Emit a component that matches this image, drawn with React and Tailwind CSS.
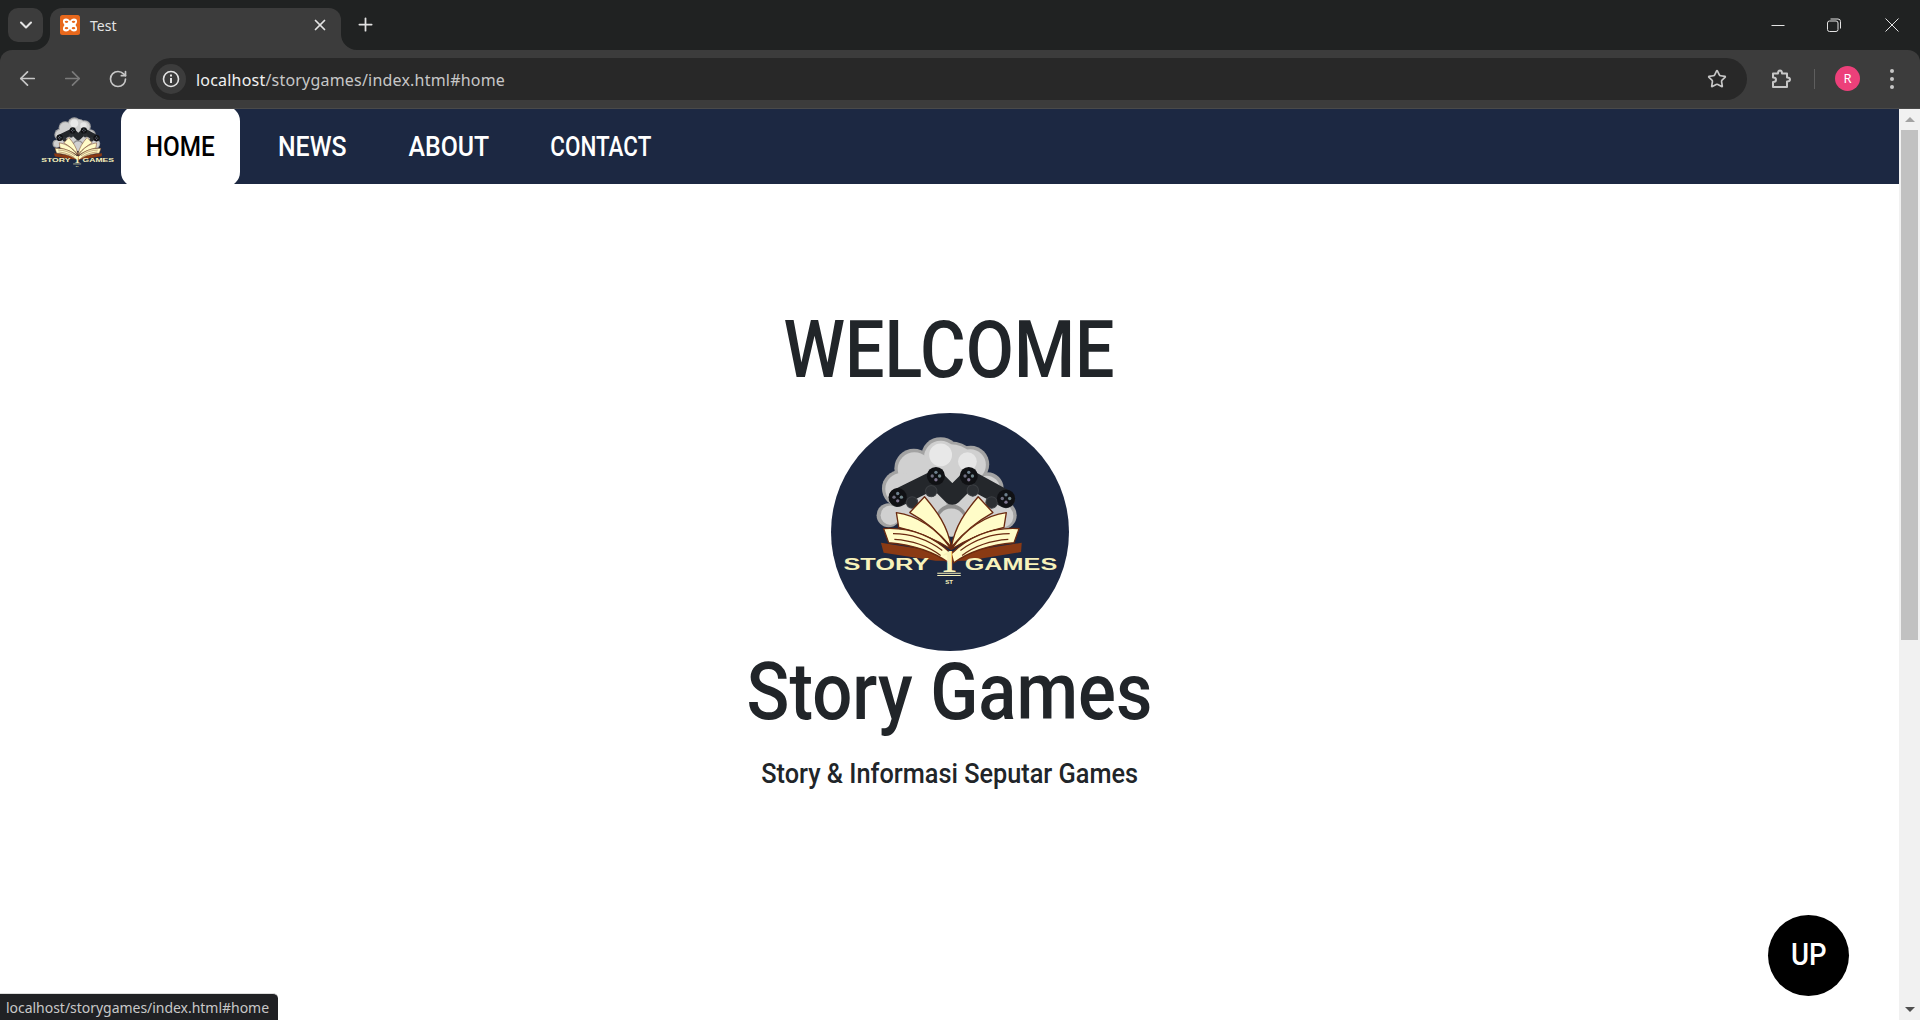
import React from "react";
import { ArrowLeft, ArrowRight, RotateCw, Star, X, Plus, ChevronDown } from "lucide-react";

function Logo({ circle, className }) {
  const pageL = (
    <g stroke="#6b2a10" strokeWidth="4" strokeLinejoin="round" fill="#fffcc8">
      <path d="M312,275 C350,320 380,360 392,425 C350,375 310,345 268,322 Z" />
      <path d="M228,322 C290,330 350,370 392,432 C340,398 290,378 235,366 Z" />
      <path d="M190,370 C270,365 340,395 392,445 L385,472 C330,432 270,418 205,412 Z" />
      <path d="M218,385 C270,385 320,402 365,435 M222,402 C270,405 320,420 360,450" fill="none" strokeWidth="3.500" />
    </g>
  );
  return (
    <svg viewBox="33 25 710 710" className={className}>
      {circle && <circle cx="388" cy="380" r="355" fill="#1c2842" />}
      <g fill="#a3a3a3">
        <circle cx="360" cy="155" r="58" /><circle cx="280" cy="190" r="58" /><circle cx="450" cy="178" r="55" />
        <circle cx="240" cy="250" r="55" /><circle cx="500" cy="250" r="48" /><circle cx="205" cy="330" r="36" />
        <circle cx="545" cy="330" r="42" /><circle cx="390" cy="200" r="90" /><circle cx="300" cy="300" r="85" /><circle cx="470" cy="300" r="85" />
      </g>
      <g fill="#d0d0d0">
        <circle cx="360" cy="158" r="50" /><circle cx="282" cy="192" r="50" /><circle cx="448" cy="180" r="47" />
        <circle cx="243" cy="252" r="48" /><circle cx="497" cy="252" r="40" /><circle cx="210" cy="330" r="29" />
        <circle cx="542" cy="332" r="35" /><circle cx="390" cy="200" r="82" /><circle cx="300" cy="300" r="78" /><circle cx="470" cy="300" r="78" />
      </g>
      <circle cx="360" cy="150" r="34" fill="#e8e8e8" />
      <circle cx="440" cy="170" r="28" fill="#e6e6e6" />
      <circle cx="392" cy="345" r="48" fill="#8f8f8f" />
      <circle cx="392" cy="352" r="42" fill="#d0d0d0" />
      <polyline points="232,278 345,222 395,272 445,222 555,282" fill="none" stroke="#24272b" strokeWidth="54" strokeLinejoin="round" strokeLinecap="round" />
      {[[275, 292], [332, 258], [456, 256], [512, 292]].map(([x, y], i) => (
        <circle key={i} cx={x} cy={y} r="17" fill="#2c2f33" stroke="#3c3f43" strokeWidth="3" />
      ))}
      {[[232, 276], [346, 213], [444, 213], [555, 280]].map(([x, y], i) => (
        <g key={i}>
          <circle cx={x} cy={y} r="27" fill="#101114" />
          <circle cx={x} cy={y - 11} r="5" fill="#6d7f8c" />
          <circle cx={x} cy={y + 11} r="5" fill="#7f7690" />
          <circle cx={x - 11} cy={y} r="5" fill="#6f6f80" />
          <circle cx={x + 11} cy={y} r="5" fill="#70858a" />
        </g>
      ))}
      <path d="M182,412 L360,440 L392,470 L425,440 L602,412 L600,440 L440,466 L345,466 L190,442 Z" fill="#8a3a14" />
      {pageL}
      <g transform="translate(784,0) scale(-1,1)">{pageL}</g>
      <text x="70" y="494" textLength="256" lengthAdjust="spacingAndGlyphs" fontFamily="Liberation Sans" fontWeight="700" fontSize="50" fill="#f7f2bb">STORY</text>
      <text x="432" y="494" textLength="276" lengthAdjust="spacingAndGlyphs" fontFamily="Liberation Sans" fontWeight="700" fontSize="50" fill="#f7f2bb">GAMES</text>
      <text x="385" y="498" textAnchor="middle" fontFamily="Liberation Serif" fontWeight="700" fontSize="96" fill="#f7f2bb">1</text>
      <path d="M350,503 H420 M350,510 H420" stroke="#f7f2bb" strokeWidth="3" />
      <text x="385" y="534" textAnchor="middle" fontFamily="Liberation Sans" fontWeight="700" fontSize="18" fill="#f7f2bb">ST</text>
    </svg>
  );
}

function Favicon() {
  return (
    <svg width="20" height="20" viewBox="0 0 20 20" className="shrink-0">
      <rect width="20" height="20" rx="2.5" fill="#e8681c" />
      <path d="M6 3.5 C8 3.5 9 4.5 10 6 C11 4.5 12 3.5 14 3.5 C17.5 3.5 18 7 15.5 10 C18 13 17.5 16.5 14 16.5 C12 16.5 11 15.5 10 14 C9 15.5 8 16.5 6 16.5 C2.500 16.5 2 13 4.500 10 C2 7 2.500 3.500 6 3.500 Z" fill="#fff" />
      <ellipse cx="6.500" cy="6.800" rx="1.800" ry="1.100" fill="#e8681c" />
      <ellipse cx="13.500" cy="6.800" rx="1.800" ry="1.100" fill="#e8681c" />
      <ellipse cx="6.500" cy="13.200" rx="1.800" ry="1.100" fill="#e8681c" />
      <ellipse cx="13.500" cy="13.200" rx="1.800" ry="1.100" fill="#e8681c" />
    </svg>
  );
}

function Tab() {
  return (
    <div className="relative ml-[7px] flex h-[42px] w-[291px] items-center rounded-t-[12px] bg-[#3c3c3c] pb-[8px] pl-[10px] pr-[12px]">
      <svg className="absolute bottom-0 left-[-16px]" width="16" height="16"><path d="M16 0 V16 H0 A16 16 0 0 0 16 0Z" fill="#3c3c3c" /></svg>
      <svg className="absolute bottom-0 right-[-16px]" width="16" height="16"><path d="M0 0 V16 H16 A16 16 0 0 1 0 0Z" fill="#3c3c3c" /></svg>
      <Favicon />
      <span className="ml-[10px] font-['Noto_Sans',sans-serif] text-[14px] text-[#e3e3e3]">Test</span>
      <X className="ml-auto text-[#e3e3e3]" size={18} strokeWidth={2.300} />
    </div>
  );
}

function WindowControls() {
  return (
    <div className="ml-auto flex h-[42px] items-center pb-[8px] text-[#e3e3e3]">
      <svg className="mr-[42px]" width="14" height="14" viewBox="0 0 14 14"><path d="M0.500 7.500 H13.500" stroke="currentColor" strokeWidth="1" /></svg>
      <svg className="mr-[44px]" width="14" height="14" viewBox="0 0 14 14" fill="none" stroke="currentColor" strokeWidth="1"><rect x="0.500" y="3" width="10.500" height="10.500" rx="2" /><path d="M3.500 1 H11 A2.500 2.500 0 0 1 13.500 3.500 V10.500" /></svg>
      <svg className="mr-[21px]" width="14" height="14" viewBox="0 0 14 14" stroke="currentColor" strokeWidth="1"><path d="M0.500 0.500 L13.500 13.500 M13.500 0.500 L0.500 13.500" /></svg>
    </div>
  );
}

function Toolbar() {
  return (
    <div className="bg-[#202222]">
      <div className="flex h-[59px] items-center rounded-t-[12px] border-b border-b-[#4a4a4a] bg-[#3c3c3c] pb-[1px]">
        <ArrowLeft className="ml-[16px] shrink-0 text-[#c7c7c7]" size={23} strokeWidth={1.800} />
        <ArrowRight className="ml-[22px] shrink-0 text-[#7b7b7b]" size={23} strokeWidth={1.800} />
        <RotateCw className="ml-[24px] shrink-0 text-[#c7c7c7]" size={20} strokeWidth={2} />
        <div className="ml-[22px] flex h-[42px] w-[1597px] shrink-0 items-center rounded-full bg-[#282828] pl-[6px] pr-[20px]">
          <div className="flex h-[30px] w-[30px] items-center justify-center rounded-full bg-[#3c3c3c]">
            <svg width="18" height="18" viewBox="0 0 18 18" fill="none" stroke="#e3e3e3"><circle cx="9" cy="9" r="7.500" strokeWidth="1.600" /><path d="M9 8 V13" strokeWidth="2" /><path d="M9 4.600 V6.400" strokeWidth="2" /></svg>
          </div>
          <span className="ml-[10px] pt-[2px] font-['Noto_Sans',sans-serif] text-[16px] tracking-[0.2px] text-[#c7c7c7]"><span className="text-[#f1f1f1]">localhost</span>/storygames/index.html#home</span>
          <Star className="ml-auto text-[#c7c7c7]" size={20} strokeWidth={2} />
        </div>
        <svg className="ml-[23px] shrink-0 text-[#c7c7c7]" width="22" height="22" viewBox="0 0 22 22" fill="none" stroke="currentColor" strokeWidth="2" strokeLinejoin="round">
          <path d="M3 5.500 H8 C8 1.500 12 1.500 12 5.500 H17 V9.500 C21 9.500 21 13.500 17 13.500 V19 H3 V14 C7 14 7 9.500 3 9.500 Z" />
        </svg>
        <div className="ml-[22px] h-[20px] w-[1px] shrink-0 bg-[#5e5e5e]" />
        <div className="ml-[20px] flex h-[25px] w-[25px] shrink-0 items-center justify-center rounded-full bg-[#ec407a] font-['Noto_Sans',sans-serif] text-[13px] text-white">R</div>
        <div className="ml-[30px] flex flex-col gap-[4px]">
          <div className="h-[4px] w-[4px] rounded-full bg-[#c7c7c7]" />
          <div className="h-[4px] w-[4px] rounded-full bg-[#c7c7c7]" />
          <div className="h-[4px] w-[4px] rounded-full bg-[#c7c7c7]" />
        </div>
      </div>
    </div>
  );
}

function NavLink({ w, active, scale, children }) {
  return (
    <a className={"flex items-center justify-center pt-[2px] font-['Roboto',sans-serif] text-[27px] font-medium " + w + " " + (active ? "-my-[3px] h-[81px] rounded-[15px] bg-white text-black" : "h-[75px] text-white")}>
      <span className={"inline-block " + scale}>{children}</span>
    </a>
  );
}

function Scrollbar() {
  return (
    <div className="flex w-[21px] shrink-0 flex-col items-center bg-[#f1f1f1]">
      <div className="flex h-[21px] items-center justify-center">
        <div className="h-0 w-0 border-x-[5px] border-b-[5px] border-x-transparent border-b-[#a3a3a3]" />
      </div>
      <div className="h-[510px] w-[17px] bg-[#c1c1c1]" />
      <div className="mt-auto flex h-[21px] items-center justify-center">
        <div className="h-0 w-0 border-x-[5px] border-t-[5px] border-x-transparent border-t-[#505050]" />
      </div>
    </div>
  );
}

export default function App() {
  return (
    <div className="relative flex h-[1020px] w-[1920px] flex-col overflow-hidden bg-white">
      <div className="flex h-[50px] items-start bg-[#202222] pt-[8px]">
        <div className="ml-[8px] flex h-[34px] w-[35px] items-center justify-center rounded-[10px] bg-[#3c3c3c]">
          <ChevronDown className="text-[#e3e3e3]" size={20} strokeWidth={2.500} />
        </div>
        <Tab />
        <Plus className="ml-[14px] mt-[6px] text-[#e3e3e3]" size={21} strokeWidth={2} />
        <WindowControls />
      </div>
      <Toolbar />
      <div className="flex min-h-0 flex-1">
        <div className="flex min-w-0 flex-1 flex-col">
          <nav className="flex h-[75px] shrink-0 items-center overflow-hidden bg-[#1c2842]">
            <Logo className="ml-[37px] mt-[5px] h-[81px] w-[81px] shrink-0" />
            <div className="ml-[3px] flex items-center">
              <NavLink w="w-[119px]" scale="scale-x-[0.9]" active>HOME</NavLink>
              <NavLink w="w-[144px]" scale="scale-x-[0.92]">NEWS</NavLink>
              <NavLink w="w-[130px]" scale="scale-x-[0.92]">ABOUT</NavLink>
              <NavLink w="w-[174px]" scale="scale-x-[0.83]">CONTACT</NavLink>
            </div>
          </nav>
          <main className="flex flex-col items-center pt-[118px] text-[#212529]">
            <h1 className="h-[96px] scale-x-[0.885] font-['Roboto',sans-serif] text-[79px] font-medium leading-[96px]">WELCOME</h1>
            <Logo circle className="mt-[15px] h-[238px] w-[238px]" />
            <h2 className="mt-[1px] h-[80px] scale-x-[0.884] font-['Roboto',sans-serif] text-[80px] font-medium leading-[80px]">Story Games</h2>
            <p className="mt-[22px] h-[40px] scale-x-[0.903] font-['Roboto',sans-serif] text-[28px] font-medium leading-[40px]">Story &amp; Informasi Seputar Games</p>
          </main>
        </div>
        <Scrollbar />
      </div>
      <button className="absolute left-[1768px] top-[915px] flex h-[81px] w-[81px] items-center justify-center rounded-full bg-black pb-[4px] font-['Roboto',sans-serif] text-[32px] font-medium text-white"><span className="inline-block scale-x-[0.86]">UP</span></button>
      <div className="absolute bottom-0 left-0 flex h-[27px] w-[278px] items-center rounded-tr-[5px] border-t border-t-[#dddddd] bg-[#202124] pl-[6px] font-['Noto_Sans',sans-serif] text-[14px] tracking-[-0.03px] text-[#c8c8c8]">localhost/storygames/index.html#home</div>
    </div>
  );
}
